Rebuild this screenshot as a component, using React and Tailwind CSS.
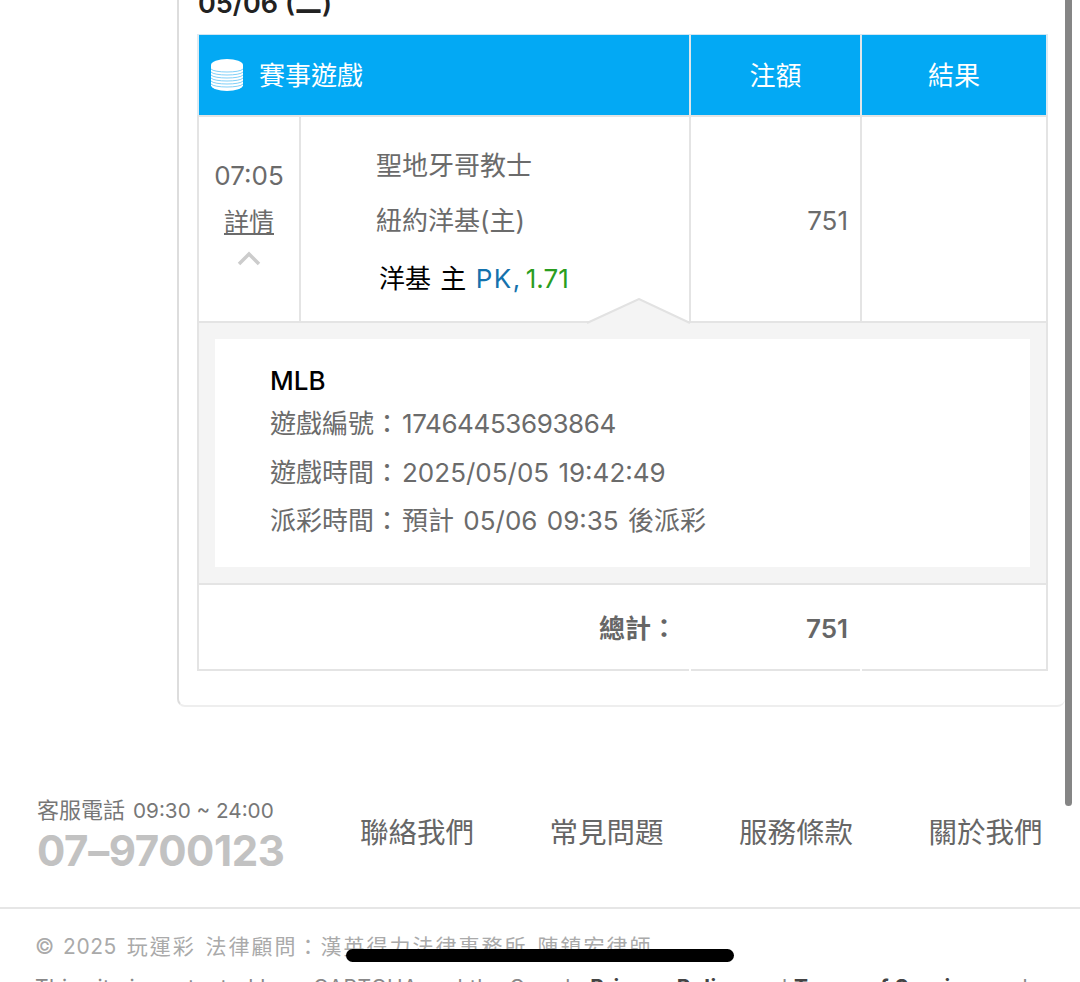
const CoinStack = () => (
  <svg width="34" height="34" viewBox="0 0 34 34" className="shrink-0">
    <rect x="1" y="7" width="32" height="21" fill="#fff" />
    <ellipse cx="17" cy="27" rx="16" ry="6" fill="#fff" />
    <ellipse cx="17" cy="7" rx="16" ry="6" fill="#fff" />
    {[11, 14, 17, 20, 23, 26].map((y) => (
      <path key={y} d={`M1 ${y}c3 4 29 4 32 0`} fill="none" stroke="#7fd0f8" strokeWidth="1" />
    ))}
  </svg>
);

const Arrow = () => (
  <svg width="106" height="26" viewBox="0 0 106 26" className="absolute left-[387px] top-[-25px]">
    <path d="M1 25 53 1l51 24" fill="#f4f4f4" stroke="#e2e2e2" strokeWidth="2" />
  </svg>
);

const ChevronUp = () => (
  <svg width="24" height="15" viewBox="0 0 24 15" className="mt-[11px]">
    <path d="M2 13 12 3l10 10" fill="none" stroke="#cccccc" strokeWidth="3.5" />
  </svg>
);

const links = ["聯絡我們", "常見問題", "服務條款", "關於我們"];

export default function App() {
  return (
    <div className="relative h-[982px] overflow-hidden bg-white font-['Inter','Noto_Sans_CJK_TC',sans-serif]">
      <div className="ml-[177px] mr-[15px] h-[707px] rounded-b-lg border-b-2 border-l-2 border-b-[#eeeeee] border-l-[#dddddd] pl-[18px]">
        <div className="h-[34px] overflow-hidden">
          <div className="ml-[1px] mt-[-14px] text-[27px] font-semibold leading-[36px] text-[#222]">05/06 (二)</div>
        </div>

        <div className="w-[851px] border-x-2 border-[#dcebf3]">
          <div className="grid h-[81px] grid-cols-[490px_169px_184px] gap-x-[2px] border-t border-[#cfe6f3] bg-[#dfe6ea] text-[26px] text-white">
            <div className="flex items-center gap-[15px] bg-[#03a9f4] pl-[11px]">
              <CoinStack />
              <span>賽事遊戲</span>
            </div>
            <div className="flex items-center justify-center bg-[#03a9f4]">注額</div>
            <div className="flex items-center justify-center bg-[#03a9f4]">結果</div>
          </div>
        </div>

        <div className="w-[851px] border-x-2 border-[#e4e4e4]">
          <div className="grid h-[208px] grid-cols-[100px_388px_169px_184px] gap-x-[2px] border-y-2 border-[#e4e4e4] bg-[#e4e4e4] text-[26px] text-[#6b6b6b]">
            <div className="flex flex-col items-center bg-white pt-[41px]">
              <div className="leading-[36px]">07:05</div>
              <div className="mt-[10px] text-[25px] leading-[36px] underline">詳情</div>
              <ChevronUp />
            </div>
            <div className="bg-white pl-[75px] pt-[31px]">
              <div className="leading-[36px]">聖地牙哥教士</div>
              <div className="mt-[19px] leading-[36px]">紐約洋基(主)</div>
              <div className="ml-[3px] mt-[22px] leading-[36px] text-black [word-spacing:2px]">
                洋基 主 <span className="tracking-[1.5px] text-[#1472ad]">PK,</span>
                <span className="ml-[4px] text-[#2a9d1f]">1.71</span>
              </div>
            </div>
            <div className="flex items-center justify-end bg-white pr-[12px] pt-[2px]">751</div>
            <div className="bg-white" />
          </div>

          <div className="relative h-[262px] border-b-2 border-[#e4e4e4] bg-[#f4f4f4] p-[16px]">
            <Arrow />
            <div className="h-[228px] bg-white pl-[55px] pt-[25px] text-[26px] text-[#6b6b6b]">
              <div className="font-medium leading-[34px] text-black">MLB</div>
              <div className="mt-[3px] flex flex-col gap-[3.5px] leading-[45px] [word-spacing:2px]">
                <div className="h-[45px]">遊戲編號：<span className="ml-[2px] tracking-[-0.4px]">17464453693864</span></div>
                <div className="h-[45px]">遊戲時間：<span className="ml-[2px]">2025/05/05 19:42:49</span></div>
                <div className="h-[45px]">派彩時間：<span className="ml-[2px]">預計 05/06 09:35 後派彩</span></div>
              </div>
            </div>
          </div>

          <div className="grid h-[86px] grid-cols-[490px_169px_184px] gap-x-[2px] text-[26px] font-semibold text-[#666]">
            <div className="flex items-center justify-end border-b-2 border-[#e4e4e4] pr-[12px] pt-[2px]">總計：</div>
            <div className="flex items-center justify-end border-b-2 border-[#e4e4e4] pr-[12px] pt-[2px]">751</div>
            <div className="border-b-2 border-[#e4e4e4]" />
          </div>
        </div>
      </div>

      <div className="flex h-[200px] items-start pl-[37px] pt-[89px]">
        <div className="w-[323px]">
          <div className="flex items-baseline gap-[8px] leading-[28px] text-[#777]">
            <span className="text-[22px]">客服電話</span>
            <span className="text-[20.7px]">09:30 ~ 24:00</span>
          </div>
          <div className="mt-[1px] text-[42px] font-bold leading-[50px] tracking-[-0.4px] text-[#c2c2c2]">07–9700123</div>
        </div>
        <div className="flex gap-[75.5px] pt-[18px]">
          {links.map((link) => (
            <span key={link} className="text-[28.5px] leading-[38px] text-[#666]">{link}</span>
          ))}
        </div>
      </div>

      <div className="border-t-2 border-[#e6e6e6] pl-[35px] pt-[24px] text-[21px] text-[#aaa]">
        <div className="leading-[28px] tracking-[2px] [word-spacing:2px]">
          <span className="tracking-[0.5px]">© 2025</span> 玩運彩 法律顧問：漢英得力法律事務所 陳鎮宏律師
        </div>
        <div className="mt-[13px] whitespace-nowrap leading-[28px] tracking-[0.55px] text-[#888]">
          This site is protected by reCAPTCHA and the Google <b className="text-[#444]">Privacy Policy</b> and <b className="text-[#444]">Terms of Service</b> apply.
        </div>
      </div>

      <div className="absolute right-[8px] top-0 h-[806px] w-[7px] rounded-b-full bg-[#858585]" />
      <div className="absolute left-[346px] top-[949px] h-[13px] w-[388px] rounded-full bg-black" />
    </div>
  );
}
